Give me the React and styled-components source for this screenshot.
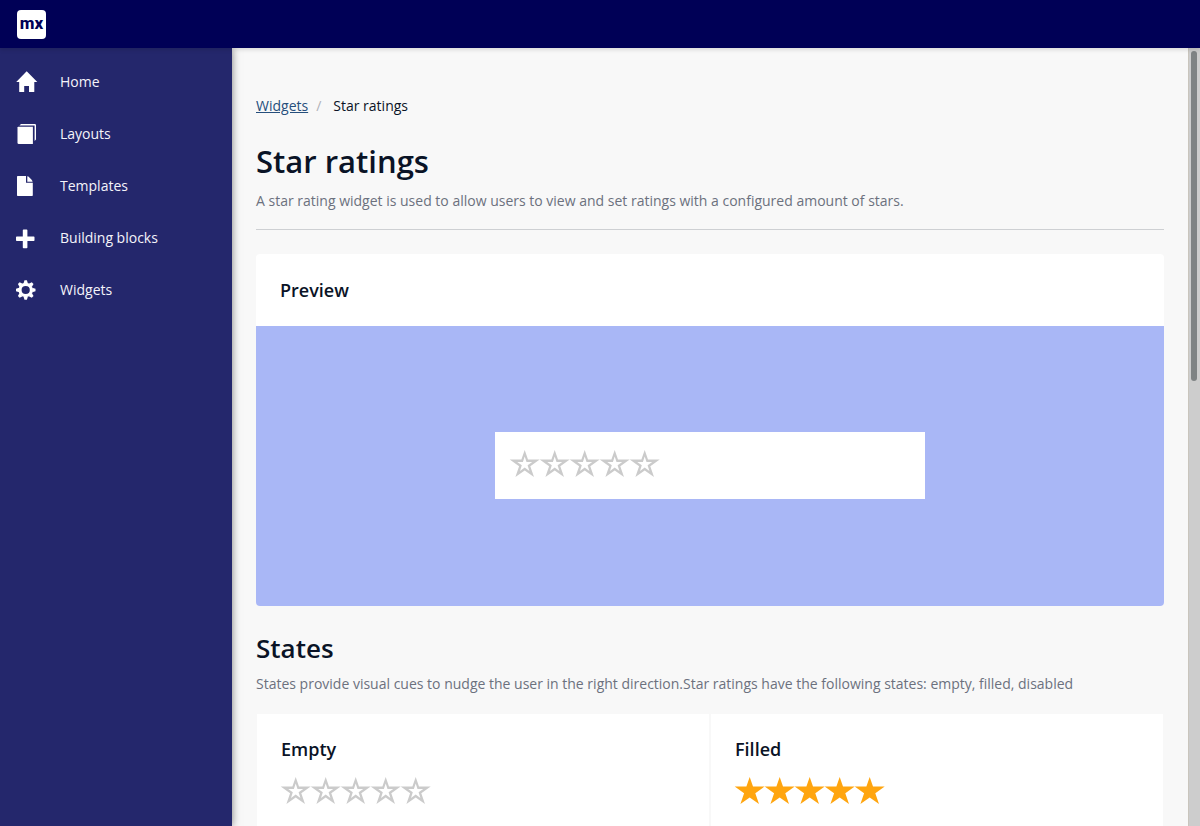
import React, { useState } from "react";
import styled, { createGlobalStyle } from "styled-components";

const GlobalStyle = createGlobalStyle`
  *, *::before, *::after { box-sizing: border-box; }
  body {
    margin: 0;
    background: #f8f8f8;
    color: #0a1326;
    font-family: "Open Sans", "Noto Sans", sans-serif;
    font-size: 14px;
    line-height: 20px;
  }
  h1, h2, h3, p, ul, ol, fieldset { margin: 0; padding: 0; }
  ul, ol { list-style: none; }
`;

const Shell = styled.div`
  display: flex;
  flex-direction: column;
  height: 100vh;
  overflow: hidden;
`;

const TopBar = styled.header`
  display: flex;
  flex: none;
  align-items: center;
  height: 48px;
  padding: 0 17px;
  background: #000056;
  box-shadow: 0 2px 4px rgba(0, 0, 0, 0.12);
  z-index: 2;
`;

const Logo = styled.a`
  display: flex;
  align-items: center;
  justify-content: center;
  width: 29px;
  height: 29px;
  padding-bottom: 3px;
  border-radius: 4px;
  background: #fff;
  color: #000056;
  font-family: Roboto, "Open Sans", sans-serif;
  font-size: 17px;
  font-weight: 800;
  line-height: 24px;
  text-decoration: none;
`;

const Body = styled.div`
  display: flex;
  flex: 1;
  min-height: 0;
`;

const Sidebar = styled.nav`
  flex: none;
  width: 232px;
  padding-top: 8px;
  background: #24276c;
  box-shadow: 0 0 8px rgba(0, 0, 0, 0.5);
  z-index: 1;
`;

const NavLink = styled.a`
  display: flex;
  align-items: center;
  gap: 22px;
  height: 52px;
  padding: 0 16px;
  color: #f4f4fa;
  text-decoration: none;

  svg {
    flex: none;
    width: 22px;
    height: 22px;
    fill: #fff;
  }
`;

const Content = styled.main`
  flex: 1;
  min-width: 0;
  padding: 48px 24px 24px;
  overflow: hidden;
`;

const Breadcrumb = styled.ol`
  display: flex;
  margin-bottom: 25px;

  li + li::before {
    content: "/";
    padding: 0 12px 0 8px;
    color: #b0b2b8;
  }

  a { color: #264f7c; }
`;

const PageTitle = styled.h1`
  margin-bottom: 10px;
  font-size: 31px;
  font-weight: 600;
  line-height: 40px;
`;

const SectionTitle = styled.h2`
  margin-bottom: 10px;
  font-size: 26px;
  font-weight: 600;
  line-height: 32px;
`;

const Description = styled.p`
  color: #6c717e;
`;

const PageHeader = styled.div`
  margin-bottom: 24px;
  padding-bottom: 18px;
  border-bottom: 1px solid #ced0d3;
`;

const CardTitle = styled.h3`
  font-size: 18px;
  font-weight: 600;
  line-height: 24px;
`;

const PreviewCard = styled.section`
  margin-bottom: 26px;
  border-radius: 4px;
  background: #fff;
  overflow: hidden;
`;

const PreviewHeader = styled.div`
  padding: 24px;
`;

const PreviewStage = styled.div`
  display: flex;
  justify-content: center;
  padding: 106px 24px 107px;
  background: #a9b7f6;
`;

const PreviewBox = styled.div`
  width: 430px;
  max-width: 100%;
  padding: 18px 15px 22px;
  background: #fff;
`;

const StateGrid = styled.div`
  display: grid;
  grid-template-columns: 1fr 1fr;
  gap: 2px;
  margin-top: 20px;
  padding: 0 1px;
`;

const StateCard = styled.section`
  min-height: 120px;
  padding: 23px 24px 26px;
  background: #fff;

  h3 { margin-bottom: 16px; }
`;

const StarGroup = styled.fieldset`
  display: flex;
  min-width: 0;
  border: 0;
`;

const StarLabel = styled.label`
  display: grid;
  width: 30px;
  height: 27px;
  cursor: pointer;

  input, svg { grid-area: 1 / 1; }

  input {
    width: 100%;
    height: 100%;
    margin: 0;
    opacity: 0;
  }

  svg {
    width: 30px;
    height: 27px;
    fill: ${(p) => (p.$filled ? "#ffa50f" : "#cbcbcb")};
    pointer-events: none;
  }
`;

const ScrollTrack = styled.div`
  display: flex;
  flex: none;
  flex-direction: column;
  width: 12px;
  padding: 3px 3px 3px 2px;
  border-left: 1px solid #c9c5bd;
  background: #cdcdcd;
`;

const ScrollThumb = styled.div`
  width: 6px;
  height: 42.75%;
  border-radius: 3px;
  background: #7f8384;
`;

const STAR = "M14.7 0L18 9.4H29.7L20.3 16.2L24 27L14.7 20.4L5.4 27L9.1 16.2L-.3 9.4H11.4Z";
const STAR_HOLE = "M14.7 6.6L16.5 12H22.2L17.6 15.3L19.4 21L14.7 17.6L10 21L11.8 15.3L7.2 12H12.9Z";

function StarRating({ name, initial = 0 }) {
  const [value, setValue] = useState(initial);
  return (
    <StarGroup aria-label={name}>
      {[1, 2, 3, 4, 5].map((n) => (
        <StarLabel key={n} $filled={n <= value}>
          <input
            type="radio"
            name={name}
            aria-label={`${n} of 5`}
            checked={value === n}
            onChange={() => setValue(n)}
          />
          <svg viewBox="0 0 30 27" aria-hidden="true" overflow="visible">
            <path fillRule="evenodd" d={n <= value ? STAR : STAR + STAR_HOLE} />
          </svg>
        </StarLabel>
      ))}
    </StarGroup>
  );
}

const NAV = [
  ["Home", <path d="M10.7 .3L.2 11H3.2V20.5Q3.2 21 3.7 21H8.2V15H13V21H17.8Q18.3 21 18.3 20.5V11H21.3Z" />],
  [
    "Layouts",
    <>
      <path d="M5 1H18.8Q20 1 20 2.2V16.5L18.6 18V2.6H3.4Z" />
      <path d="M2.2 3.8H16.9V21H2.8Q1.5 21 1.5 19.7V4.5Z" />
    </>,
  ],
  [
    "Templates",
    <>
      <path d="M1.7 1H10V7.7H16.8V20.3Q16.8 21 16.1 21H1.7Q1 21 1 20.3V1.7Q1 1 1.7 1Z" />
      <path d="M11.3 1.3Q12.4 1.4 13.4 2.5L15.4 4.4Q16.5 5.5 16.6 6.7H11.3Z" />
    </>,
  ],
  ["Building blocks", <path d="M7.6 2.5H10.6Q11.4 2.5 11.4 3.3V9.4H17.8Q18.5 9.4 18.5 10.2V13.2Q18.5 14 17.8 14H11.4V20.4Q11.4 21.2 10.6 21.2H7.6Q6.8 21.2 6.8 20.4V14H.8Q0 14 0 13.2V10.2Q0 9.4 .8 9.4H6.8V3.3Q6.8 2.5 7.6 2.5Z" />],
  [
    "Widgets",
    <g transform="translate(9.7 11)">
      <path
        fillRule="evenodd"
        d="M0-7.2A7.2 7.2 0 1 1 0 7.2A7.2 7.2 0 1 1 0-7.2ZM0-4.1A4.1 4.1 0 1 0 0 4.1A4.1 4.1 0 1 0 0-4.1Z"
      />
      {[0, 45, 90, 135, 180, 225, 270, 315].map((a) => (
        <path key={a} transform={`rotate(${a})`} d="M-2.2-6.5L-1.2-9.8H1.2L2.2-6.5Z" />
      ))}
    </g>,
  ],
];

export default function App() {
  return (
    <Shell>
      <GlobalStyle />
      <TopBar>
        <Logo href="#home">mx</Logo>
      </TopBar>
      <Body>
        <Sidebar aria-label="Main">
          <ul>
            {NAV.map(([label, icon]) => (
              <li key={label}>
                <NavLink href="#">
                  <svg viewBox="0 0 22 22" aria-hidden="true">{icon}</svg>
                  {label}
                </NavLink>
              </li>
            ))}
          </ul>
        </Sidebar>
        <Content>
          <Breadcrumb>
            <li><a href="#widgets">Widgets</a></li>
            <li>Star ratings</li>
          </Breadcrumb>
          <PageHeader>
            <PageTitle>Star ratings</PageTitle>
            <Description>
              A star rating widget is used to allow users to view and set ratings with a configured amount of stars.
            </Description>
          </PageHeader>
          <PreviewCard>
            <PreviewHeader>
              <CardTitle>Preview</CardTitle>
            </PreviewHeader>
            <PreviewStage>
              <PreviewBox>
                <StarRating name="preview" />
              </PreviewBox>
            </PreviewStage>
          </PreviewCard>
          <SectionTitle>States</SectionTitle>
          <Description>
            States provide visual cues to nudge the user in the right direction.Star ratings have the following states: empty, filled, disabled
          </Description>
          <StateGrid>
            <StateCard>
              <CardTitle>Empty</CardTitle>
              <StarRating name="empty" />
            </StateCard>
            <StateCard>
              <CardTitle>Filled</CardTitle>
              <StarRating name="filled" initial={5} />
            </StateCard>
          </StateGrid>
        </Content>
        <ScrollTrack aria-hidden="true">
          <ScrollThumb />
        </ScrollTrack>
      </Body>
    </Shell>
  );
}
